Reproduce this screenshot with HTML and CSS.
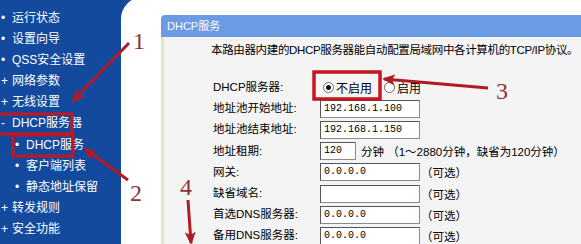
FILE: index.html
```html
<!DOCTYPE html>
<html lang="zh-CN">
<head>
    <meta charset="UTF-8">
    <title>DHCP服务</title>
    <link rel="stylesheet" href="styles.css">
</head>
<body>
    <div class="page">
        <!-- 左侧菜单 -->
        <ul class="menu">
            <li><span class="mark">•</span>运行状态</li>
            <li><span class="mark">•</span>设置向导</li>
            <li><span class="mark">•</span>QSS安全设置</li>
            <li><span class="mark">+</span>网络参数</li>
            <li><span class="mark">+</span>无线设置</li>
            <li><span class="mark">-</span>DHCP服务器</li>
            <li class="sub"><span class="mark">•</span>DHCP服务</li>
            <li class="sub"><span class="mark">•</span>客户端列表</li>
            <li class="sub"><span class="mark">•</span>静态地址保留</li>
            <li><span class="mark">+</span>转发规则</li>
            <li><span class="mark">+</span>安全功能</li>
        </ul>

        <!-- 主体 -->
        <div class="main">
            <div class="panel">
                <div class="panel-title">DHCP服务</div>
                <div class="panel-body">
                    <p class="intro">本路由器内建的DHCP服务器能自动配置局域网中各计算机的TCP/IP协议。</p>
                    <div class="form">
                        <label>DHCP服务器:</label>
                        <div class="field">
                            <span class="radio checked"></span><span class="opt">不启用</span>
                            <span class="radio second"></span><span class="opt">启用</span>
                        </div>

                        <label>地址池开始地址:</label>
                        <div class="field"><span class="input">192.168.1.100</span></div>

                        <label>地址池结束地址:</label>
                        <div class="field"><span class="input">192.168.1.150</span></div>

                        <label>地址租期:</label>
                        <div class="field"><span class="input short">120</span><span class="note">分钟 （1～2880分钟，缺省为120分钟）</span></div>

                        <label>网关:</label>
                        <div class="field"><span class="input">0.0.0.0</span><span class="note opt-tip">（可选）</span></div>

                        <label>缺省域名:</label>
                        <div class="field"><span class="input"></span><span class="note opt-tip">（可选）</span></div>

                        <label>首选DNS服务器:</label>
                        <div class="field"><span class="input">0.0.0.0</span><span class="note opt-tip">（可选）</span></div>

                        <label>备用DNS服务器:</label>
                        <div class="field"><span class="input">0.0.0.0</span><span class="note opt-tip">（可选）</span></div>
                    </div>
                </div>
            </div>
        </div>

        <!-- 红色标注 -->
        <svg class="marks" width="581" height="244" viewBox="0 0 581 244">
            <defs>
                <marker id="head" markerWidth="13" markerHeight="11" refX="11" refY="5.5" orient="auto" markerUnits="userSpaceOnUse">
                    <path d="M0,0 L13,5.5 L0,11 L3,5.5 Z" fill="#b01b25"/>
                </marker>
            </defs>
            <rect x="-4" y="114" width="76" height="20" fill="none" stroke="#c4161f" stroke-width="3"/>
            <rect x="13" y="135" width="60" height="21" fill="none" stroke="#c4161f" stroke-width="3"/>
            <rect x="314" y="72" width="66" height="27" fill="none" stroke="#c4161f" stroke-width="3.5"/>
            <line x1="129" y1="43" x2="73" y2="101" stroke="#b01b25" stroke-width="3" marker-end="url(#head)"/>
            <line x1="128" y1="180" x2="85" y2="149" stroke="#b01b25" stroke-width="3" marker-end="url(#head)"/>
            <line x1="488" y1="88" x2="384" y2="79" stroke="#b01b25" stroke-width="3" marker-end="url(#head)"/>
            <line x1="188" y1="200" x2="191" y2="243" stroke="#b01b25" stroke-width="3" marker-end="url(#head)"/>
            <text x="133" y="49" class="num">1</text>
            <text x="130" y="201" class="num">2</text>
            <text x="496" y="99" class="num">3</text>
            <text x="180" y="195" class="num">4</text>
        </svg>
    </div>
</body>
</html>
```

FILE: styles.css
```css
/* 路由器 DHCP 设置页 */
body {
    margin: 0;
    font-family: 'Liberation Sans', 'Noto Sans CJK SC', sans-serif;
    font-size: 12px;
    background: #ffffff;
    overflow: hidden;
}
.page {
    position: relative;
    display: flex;
    width: 581px;
    height: 244px;
    background: #134a9e;
    overflow: hidden;
}
.menu {
    list-style: none;
    margin: 0;
    padding: 8px 0 0 0;
    width: 121px;
    flex: none;
    color: #ffffff;
}
.menu li {
    height: 21.1px;
    line-height: 21px;
    white-space: nowrap;
}
.menu .mark {
    display: inline-block;
    width: 11px;
    padding-left: 1px;
    text-align: left;
}
.menu .sub {
    padding-left: 14px;
}
.main {
    flex: 1;
    min-width: 0;
    background: #ffffff;
    border-top-left-radius: 22px;
    padding: 15px 0 0 40px;
    margin-top: -3px;
}
.panel {
    height: 100%;
    display: flex;
    flex-direction: column;
}
.panel-title {
    height: 22px;
    line-height: 22px;
    margin-top: 3px;
    padding-left: 6px;
    background: #6c9be6;
    color: #ffffff;
    font-size: 11px;
    border-top-left-radius: 4px;
}
.panel-body {
    flex: 1;
    background: #f4f4f4;
    border-left: 3px solid #e9e1cc;
    padding: 5px 0 0 47px;
}
.intro {
    margin: 0;
    line-height: 16px;
    font-size: 11.5px;
    white-space: nowrap;
    letter-spacing: -0.35px;
}
.form {
    display: grid;
    grid-template-columns: 107px 1fr;
    grid-auto-rows: 21.2px;
    margin-top: 19px;
    padding-left: 2px;
}
.form label {
    line-height: 21px;
    font-size: 11.5px;
    white-space: nowrap;
}
.field {
    display: flex;
    align-items: center;
    white-space: nowrap;
}
.radio {
    width: 11px;
    height: 11px;
    border: 1px solid #6a6a6a;
    border-radius: 50%;
    background: #ffffff;
    box-sizing: border-box;
    margin: 0 2px 0 3px;
    position: relative;
}
.radio.second {
    margin-left: 10px;
}
.radio.checked::after {
    content: '';
    position: absolute;
    left: 2px;
    top: 2px;
    width: 5px;
    height: 5px;
    border-radius: 50%;
    background: #111111;
}
.opt {
    margin-right: 2px;
}
.input {
    display: inline-block;
    box-sizing: border-box;
    width: 100px;
    height: 18px;
    line-height: 16px;
    padding-left: 3px;
    background: #ffffff;
    border: 1px solid #8a8a8a;
    border-top-color: #555555;
    border-left-color: #555555;
    font-family: 'Liberation Mono', monospace;
    font-size: 10px;
}
.input.short {
    width: 36px;
}
.note {
    margin-left: 5px;
    font-size: 11.5px;
}
.opt-tip {
    margin-left: 1px;
}
.marks {
    position: absolute;
    left: 0;
    top: 0;
    pointer-events: none;
}
.num {
    font-family: 'Liberation Serif', serif;
    font-size: 24px;
    fill: #8e3236;
}
```
